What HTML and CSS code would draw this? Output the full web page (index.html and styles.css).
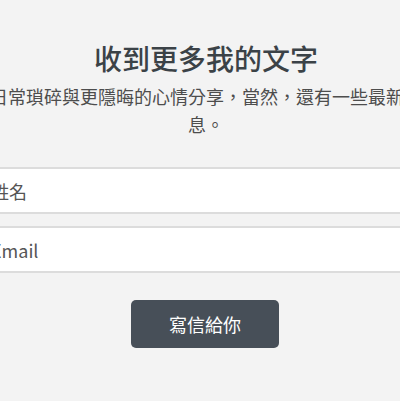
FILE: index.html
```html
<!DOCTYPE html>
<html lang="zh-Hant">
<head>
<meta charset="utf-8">
<title>收到更多我的文字</title>
<link rel="stylesheet" href="styles.css">
</head>
<body>
<main class="signup">
  <h2 class="signup-title">收到更多我的文字</h2>
  <p class="signup-lead">日常瑣碎與更隱晦的心情分享，當然，還有一些最新消息。</p>
  <form class="signup-form">
    <input class="field" type="text" placeholder="姓名">
    <input class="field" type="email" placeholder="Email">
    <button class="submit" type="button">寫信給你</button>
  </form>
</main>
</body>
</html>
```

FILE: styles.css
```css
html, body {
  margin: 0;
  padding: 0;
  overflow: hidden;
  background: #f3f3f3;
}

body {
  font-family: "Noto Sans CJK TC", "Noto Sans", sans-serif;
  color: #4a4a4a;
}

.signup {
  width: 466px;
  margin-left: -27px;
  padding-top: 38px;
  text-align: center;
}

.signup-title {
  margin: 0;
  font-size: 28px;
  line-height: 40px;
  font-weight: 500;
  color: #3b4247;
}

.signup-lead {
  margin: 4px 0 0;
  font-size: 18px;
  line-height: 28px;
  color: #4d4d4d;
}

.signup-form {
  margin-top: 29px;
  display: flex;
  flex-direction: column;
  gap: 12px;
}

.field {
  box-sizing: border-box;
  width: 100%;
  height: 47px;
  margin: 0;
  padding: 0 16px;
  border: 2px solid #dcdcdc;
  border-radius: 0;
  background: #ffffff;
  font-family: "Noto Sans CJK TC", "Noto Sans", sans-serif;
  font-size: 18px;
  color: #444;
  outline: none;
}

.field::placeholder {
  color: #555555;
  opacity: 1;
}

.submit {
  align-self: center;
  width: 148px;
  height: 48px;
  margin: 15px 0 0 -2px;
  padding: 0;
  border: none;
  border-radius: 5px;
  background: #474f58;
  color: #ffffff;
  font-family: "Noto Sans CJK TC", "Noto Sans", sans-serif;
  font-size: 18px;
  cursor: pointer;
}
```
